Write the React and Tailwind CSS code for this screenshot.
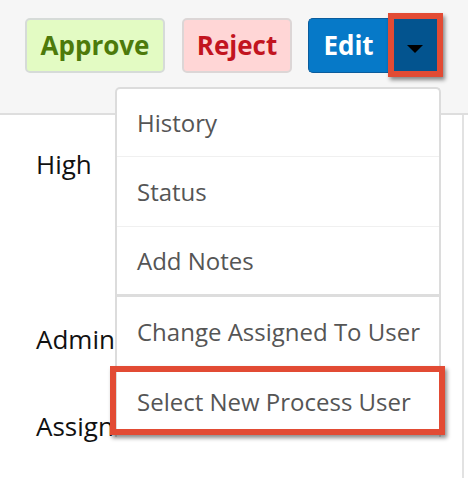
import React from "react";

const items = [
  { label: "History", h: "h-[68px]", border: "border-b border-[#f0f0f0]" },
  { label: "Status", h: "h-[70px]", border: "border-b border-[#f0f0f0]" },
  { label: "Add Notes", h: "h-[70px]", border: "border-b-[3px] border-[#dddddd]" },
  { label: "Change Assigned To User", h: "h-[70px]", border: "" },
  { label: "Select New Process User", h: "h-[70px]", border: "", marked: true },
];

const ActionMenu = () => (
  <div className="absolute left-[115px] top-[87px] w-[326px] rounded-t-[5px] border-2 border-b-0 border-[#dcdcdc] bg-white">
    {items.map((item) => (
      <div
        key={item.label}
        className={`relative flex items-center pl-[20px] text-[24px] text-[#555555] ${item.h} ${item.border}`}
      >
        {item.marked && (
          <div className="absolute -left-[7px] -right-[6px] -top-[1px] h-[69px] border-[6px] border-[#e24b34] shadow-[2px_3px_4px_rgba(0,0,0,0.45)]" />
        )}
        <span className="relative">{item.label}</span>
      </div>
    ))}
  </div>
);

export default function App() {
  return (
    <div
      className="relative h-[478px] w-[468px] overflow-hidden bg-white"
      style={{ fontFamily: '"Open Sans", "Liberation Sans", sans-serif' }}
    >
      <div className="flex h-[115px] items-start justify-end border-b-2 border-[#dedede] bg-[#f6f6f6] pr-[27px] pt-[18px]">
        <button className="flex h-[55px] w-[140px] items-center justify-center rounded-[5px] border-2 border-[#d6dbd8] bg-[#e3fbc3] text-[26px] font-bold text-[#4d7a0b]">
          Approve
        </button>
        <button className="ml-[17px] flex h-[55px] w-[110px] items-center justify-center rounded-[5px] border-2 border-[#dcd6d6] bg-[#ffd6d6] text-[26px] font-bold text-[#c2141f]">
          Reject
        </button>
        <div className="ml-[16px] flex h-[55px]">
          <button className="flex w-[80px] items-center justify-center rounded-l-[5px] border border-r-0 border-[#0a5c9c] bg-[#0679c8] text-[26px] font-bold text-white">
            Edit
          </button>
          <div className="relative flex w-[53px] items-center justify-center bg-[#03548f]">
            <div className="absolute -bottom-[4px] -right-[2px] -top-[5px] left-0 border-[6px] border-[#e24b34] shadow-[2px_3px_4px_rgba(0,0,0,0.45)]" />
            <span className="relative mt-[7px] h-0 w-0 border-x-[8px] border-t-[8px] border-x-transparent border-t-black" />
          </div>
        </div>
      </div>

      <div className="flex h-[363px] w-[464px] flex-col border-r-2 border-[#e2e2e2] pl-[36px] text-[26px] text-[#111111]">
        <div className="mt-[31px] leading-[36px]">High</div>
        <div className="mt-[139px] leading-[36px]">Admin</div>
        <div className="mt-[51px] leading-[36px]">Assign</div>
      </div>

      <ActionMenu />
    </div>
  );
}
